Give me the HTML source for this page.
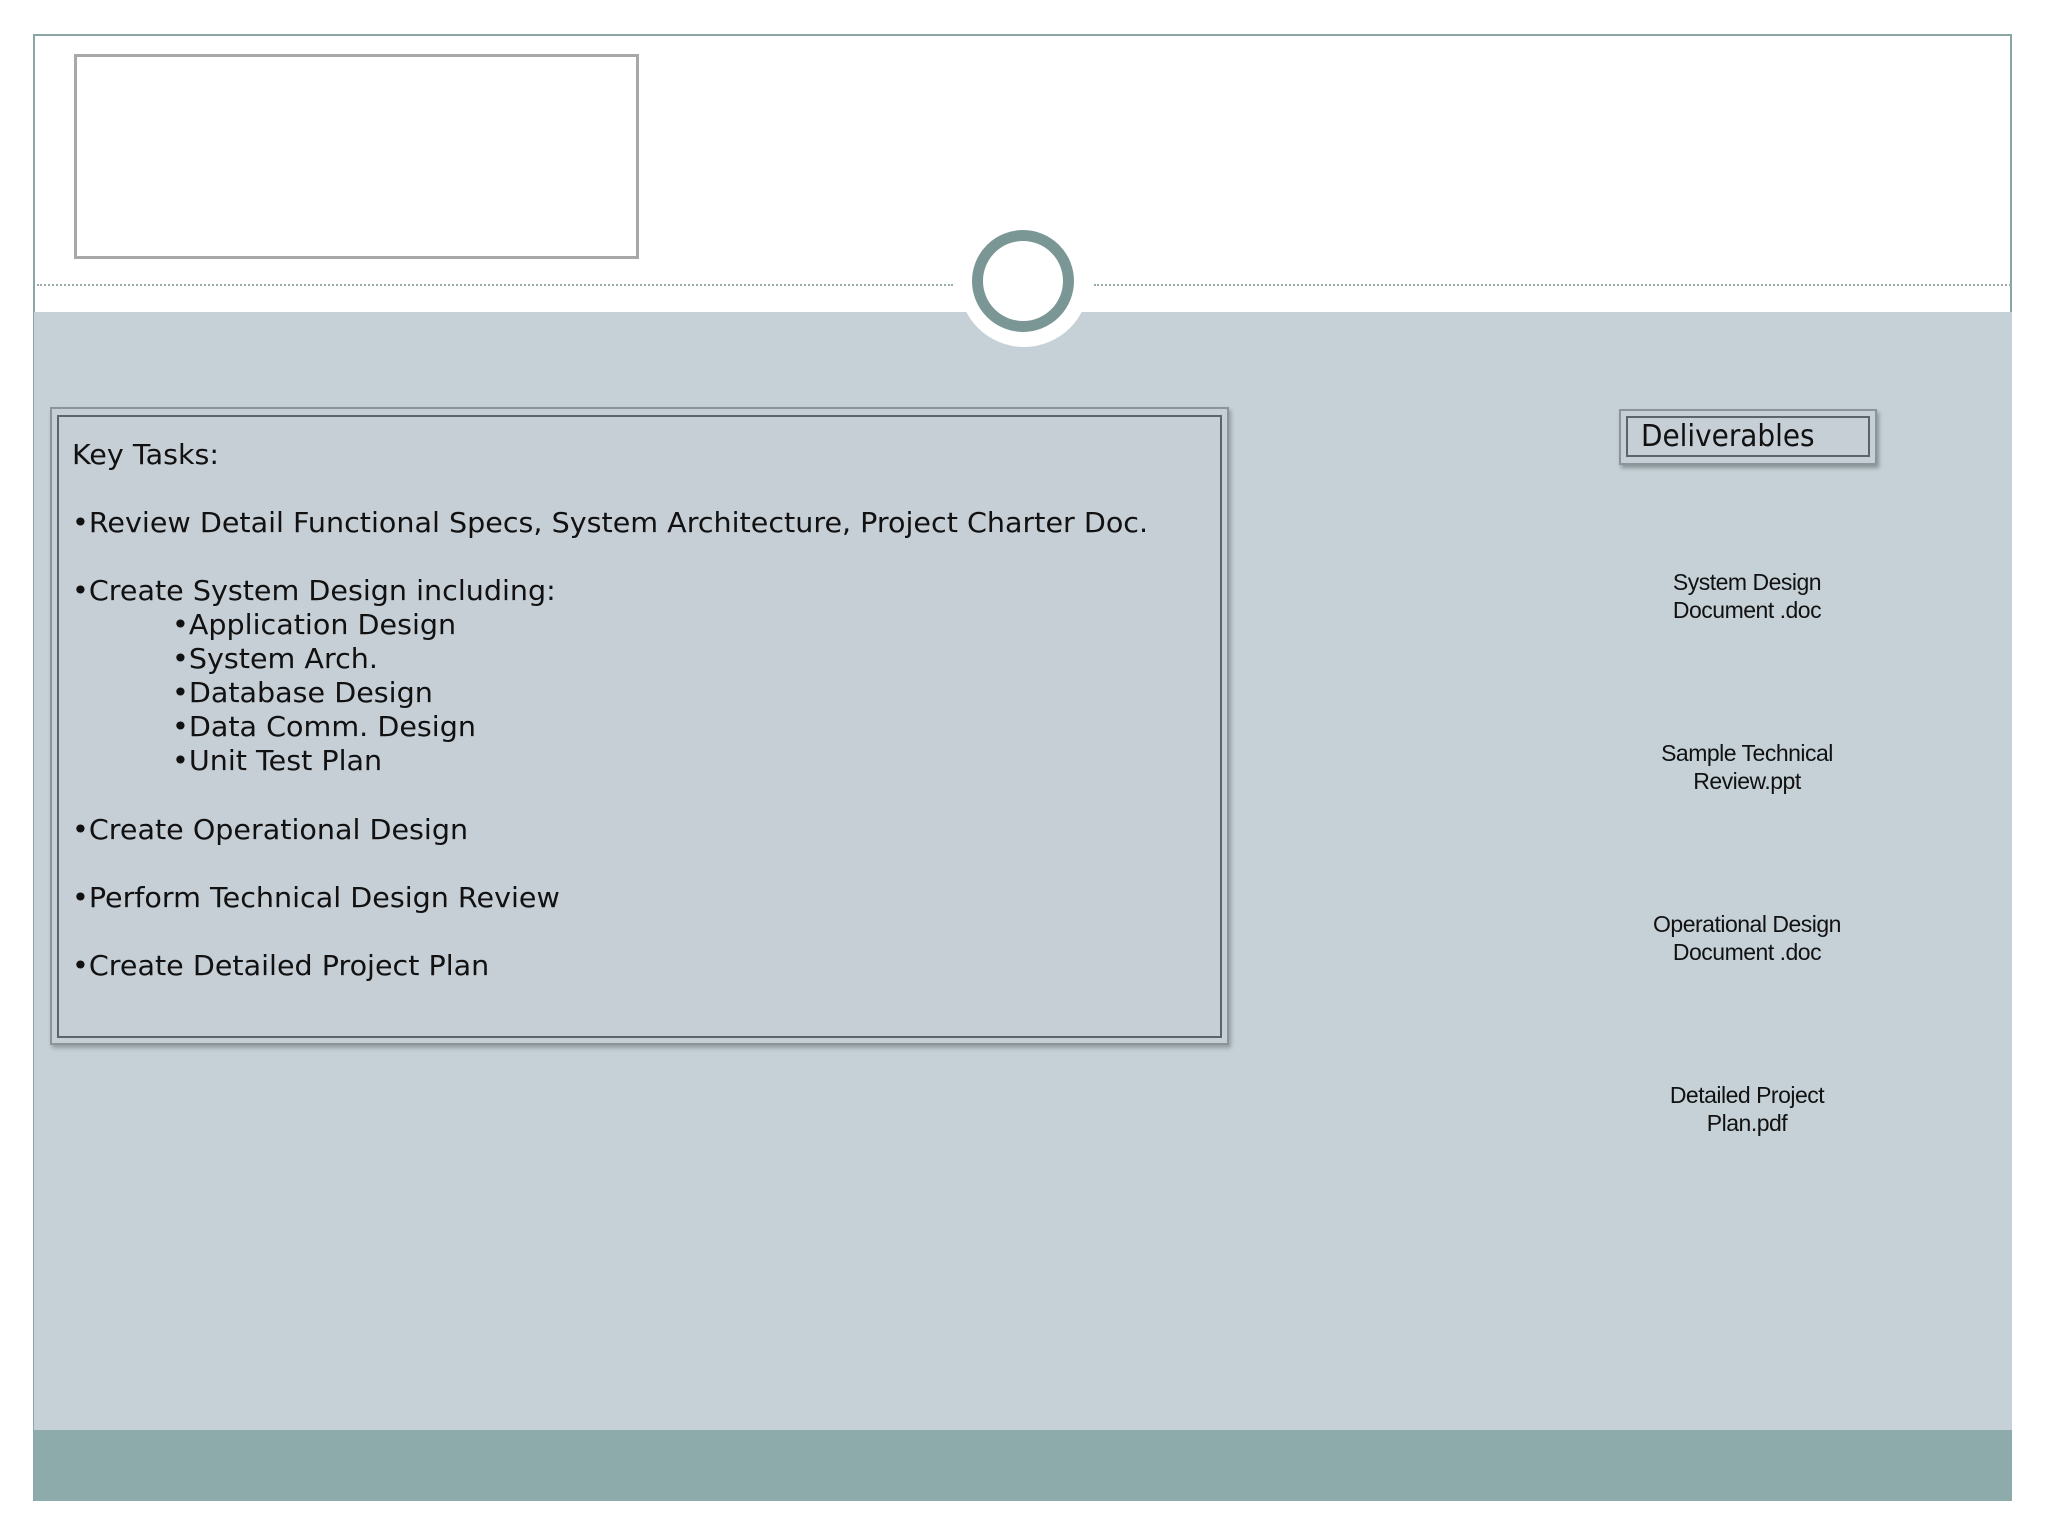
<!DOCTYPE html>
<html><head><meta charset="utf-8"><style>
html,body{margin:0;padding:0;background:#fff}
body{width:2048px;height:1536px;position:relative;overflow:hidden;font-family:"DejaVu Sans","Liberation Sans",sans-serif}
.frame{position:absolute;left:33px;top:34px;width:1979px;height:1467px;border:2px solid #8aa5a4;background:#fff;box-sizing:border-box}
.gray{position:absolute;left:34px;top:312px;width:1978px;height:1118px;background:#c5d1d7}
.foot{position:absolute;left:34px;top:1430px;width:1978px;height:71px;background:#8eabab}
.dots{position:absolute;top:284px;height:0;border-top:2px dotted #9aa}
.halo{position:absolute;left:959px;top:217px;width:130px;height:130px;border-radius:50%;background:#fff}
.ring{position:absolute;left:972px;top:230px;width:80px;height:80px;border-radius:50%;border:11px solid #7a9796}
.tl{position:absolute;left:74px;top:54px;width:565px;height:205px;border:3px solid #a8a8a8;box-sizing:border-box}
.kt{position:absolute;left:50px;top:407px;width:1179px;height:638px;border:2px solid #8a9499;box-sizing:border-box;background:#c6ced6;box-shadow:2px 3px 4px rgba(0,0,0,.25)}
.kt .in{position:absolute;left:5px;top:6px;right:5px;bottom:5px;border:2px solid #5b6468}
.t{position:absolute;font-size:28px;color:#111;white-space:nowrap;transform:scaleX(1.02);transform-origin:left}
.dl{position:absolute;left:1619px;top:409px;width:258px;height:56px;border:2px solid #8a9499;box-sizing:border-box;background:#c6ced6;box-shadow:2px 3px 4px rgba(0,0,0,.3)}
.dl .in{position:absolute;left:5px;top:5px;right:5px;bottom:6px;border:2px solid #5b6468}
.dl span{position:absolute;left:20px;top:8px;font-size:30px;color:#111;transform:scaleX(.93);transform-origin:left;white-space:nowrap}
.d{position:absolute;left:1547px;width:400px;text-align:center;font-family:"Liberation Sans",sans-serif;font-size:23px;line-height:28px;color:#111;letter-spacing:-.5px}
</style></head><body>
<div class="frame"></div>
<div class="gray"></div>
<div class="foot"></div>
<div class="dots" style="left:37px;width:916px"></div>
<div class="dots" style="left:1094px;width:917px"></div>
<div class="halo"></div>
<div class="ring"></div>
<div class="tl"></div>
<div class="kt"><div class="in"></div></div>
<div class="t" style="left:72px;top:438px">Key Tasks:</div>
<div class="t" style="left:72px;top:506px">•Review Detail Functional Specs, System Architecture, Project Charter Doc.</div>
<div class="t" style="left:72px;top:574px">•Create System Design including:</div>
<div class="t" style="left:172px;top:608px">•Application Design</div>
<div class="t" style="left:172px;top:642px">•System Arch.</div>
<div class="t" style="left:172px;top:676px">•Database Design</div>
<div class="t" style="left:172px;top:710px">•Data Comm. Design</div>
<div class="t" style="left:172px;top:744px">•Unit Test Plan</div>
<div class="t" style="left:72px;top:813px">•Create Operational Design</div>
<div class="t" style="left:72px;top:881px">•Perform Technical Design Review</div>
<div class="t" style="left:72px;top:949px">•Create Detailed Project Plan</div>
<div class="dl"><div class="in"></div><span>Deliverables</span></div>
<div class="d" style="top:568px">System Design<br>Document .doc</div>
<div class="d" style="top:739px">Sample Technical<br>Review.ppt</div>
<div class="d" style="top:910px">Operational Design<br>Document .doc</div>
<div class="d" style="top:1081px">Detailed Project<br>Plan.pdf</div>
</body></html>
